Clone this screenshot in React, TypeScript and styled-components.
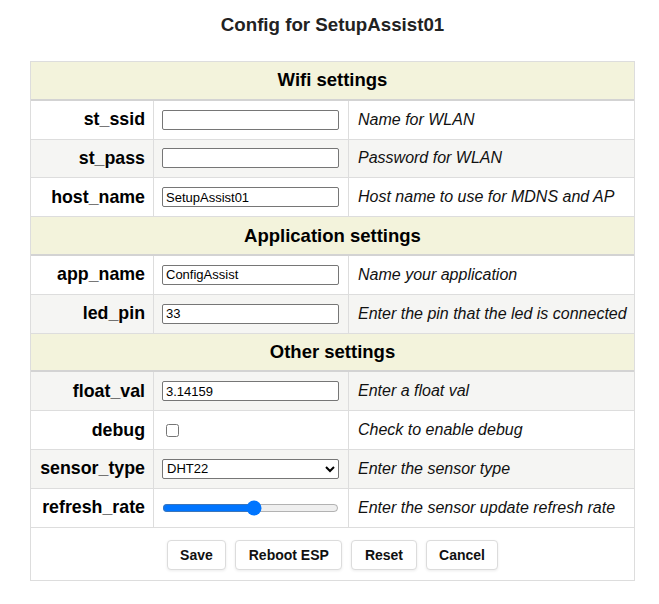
import React from "react";
import styled, { createGlobalStyle } from "styled-components";

const Global = createGlobalStyle`
  html, body { margin: 0; padding: 0; background: #fff; }
  body { font-family: "Liberation Sans", Arial, sans-serif; color: #000; }
`;

const Page = styled.div`
  width: 659px;
  padding: 14px 0 0 30px;
  box-sizing: border-box;
`;

const Title = styled.h3`
  margin: 0 0 25px;
  width: 605px;
  text-align: center;
  font-size: 18.72px;
  line-height: 22px;
  font-weight: bold;
  color: #222;
`;

const Table = styled.div`
  width: 605px;
  border: 1px solid #ddd;
  box-sizing: border-box;
`;

const SectionHeader = styled.div`
  height: 38.8px;
  box-sizing: border-box;
  background: #f3f3dc;
  border-bottom: 2px solid #d3d3d3;
  display: flex;
  align-items: center;
  justify-content: center;
  font-weight: bold;
  font-size: 18.5px;
`;

const Row = styled.div<{ $alt?: boolean }>`
  height: 38.8px;
  box-sizing: border-box;
  display: grid;
  grid-template-columns: 123px 195px 1fr;
  background: ${(p) => (p.$alt ? "#f5f5f3" : "#fff")};
  border-bottom: 1px solid #ddd;
`;

const LabelCell = styled.div`
  display: flex;
  align-items: center;
  justify-content: flex-end;
  padding-right: 8px;
  border-right: 1px solid #ddd;
  font-weight: bold;
  font-size: 17.8px;
  white-space: nowrap;
`;

const InputCell = styled.div`
  display: flex;
  align-items: center;
  padding-left: 8px;
  border-right: 1px solid #ddd;
`;

const DescCell = styled.div`
  display: flex;
  align-items: center;
  padding-left: 9px;
  font-style: italic;
  font-size: 16px;
  color: #111;
  white-space: nowrap;
`;

const TextInput = styled.input`
  width: 177px;
  height: 20px;
  box-sizing: border-box;
  border: 1px solid #767676;
  border-radius: 2px;
  padding: 1px 3px;
  font-family: "Liberation Sans", Arial, sans-serif;
  font-size: 13px;
  color: #000;
  background: #fff;
`;

const Select = styled.select`
  width: 177px;
  height: 20px;
  box-sizing: border-box;
  border: 1px solid #767676;
  border-radius: 2px;
  font-family: "Liberation Sans", Arial, sans-serif;
  font-size: 13px;
  color: #000;
  background: #fff;
`;

const Check = styled.input`
  margin: 3px 3px 3px 4px;
  width: 13px;
  height: 13px;
`;

const Range = styled.input`
  width: 177px;
  margin: 0;
  accent-color: #0075ff;
`;

const ButtonRow = styled.div`
  height: 52px;
  display: flex;
  align-items: center;
  justify-content: center;
  gap: 9px;
  padding-top: 2px;
  box-sizing: border-box;
`;

const Button = styled.button`
  height: 30px;
  padding: 0 12.5px;
  background: #fff;
  border: 1px solid #dcdcdc;
  border-radius: 4px;
  box-shadow: 0 1px 3px rgba(0, 0, 0, 0.08);
  font-family: "Liberation Sans", Arial, sans-serif;
  font-weight: bold;
  font-size: 14px;
  color: #111;
  cursor: pointer;
`;

type Field = {
  name: string;
  desc: string;
  kind: "text" | "check" | "select" | "range";
  value?: string;
};

type Section = { title: string; fields: Field[] };

const sections: Section[] = [
  {
    title: "Wifi settings",
    fields: [
      { name: "st_ssid", desc: "Name for WLAN", kind: "text", value: "" },
      { name: "st_pass", desc: "Password for WLAN", kind: "text", value: "" },
      { name: "host_name", desc: "Host name to use for MDNS and AP", kind: "text", value: "SetupAssist01" },
    ],
  },
  {
    title: "Application settings",
    fields: [
      { name: "app_name", desc: "Name your application", kind: "text", value: "ConfigAssist" },
      { name: "led_pin", desc: "Enter the pin that the led is connected", kind: "text", value: "33" },
    ],
  },
  {
    title: "Other settings",
    fields: [
      { name: "float_val", desc: "Enter a float val", kind: "text", value: "3.14159" },
      { name: "debug", desc: "Check to enable debug", kind: "check" },
      { name: "sensor_type", desc: "Enter the sensor type", kind: "select", value: "DHT22" },
      { name: "refresh_rate", desc: "Enter the sensor update refresh rate", kind: "range", value: "52" },
    ],
  },
];

function Control({ f }: { f: Field }) {
  switch (f.kind) {
    case "check":
      return <Check type="checkbox" defaultChecked={false} />;
    case "select":
      return (
        <Select defaultValue={f.value}>
          <option>BMP280</option>
          <option>DHT11</option>
          <option>DHT22</option>
        </Select>
      );
    case "range":
      return <Range type="range" min={0} max={100} defaultValue={f.value} />;
    default:
      return <TextInput type="text" defaultValue={f.value} />;
  }
}

export default function App() {
  let idx = 0;
  return (
    <Page>
      <Global />
      <Title>Config for SetupAssist01</Title>
      <Table>
        {sections.map((s) => {
          idx++;
          return (
            <React.Fragment key={s.title}>
              <SectionHeader>{s.title}</SectionHeader>
              {s.fields.map((f) => {
                idx++;
                return (
                  <Row key={f.name} $alt={idx % 2 === 1}>
                    <LabelCell>{f.name}</LabelCell>
                    <InputCell>
                      <Control f={f} />
                    </InputCell>
                    <DescCell>{f.desc}</DescCell>
                  </Row>
                );
              })}
            </React.Fragment>
          );
        })}
        <ButtonRow>
          <Button>Save</Button>
          <Button>Reboot ESP</Button>
          <Button>Reset</Button>
          <Button>Cancel</Button>
        </ButtonRow>
      </Table>
    </Page>
  );
}
